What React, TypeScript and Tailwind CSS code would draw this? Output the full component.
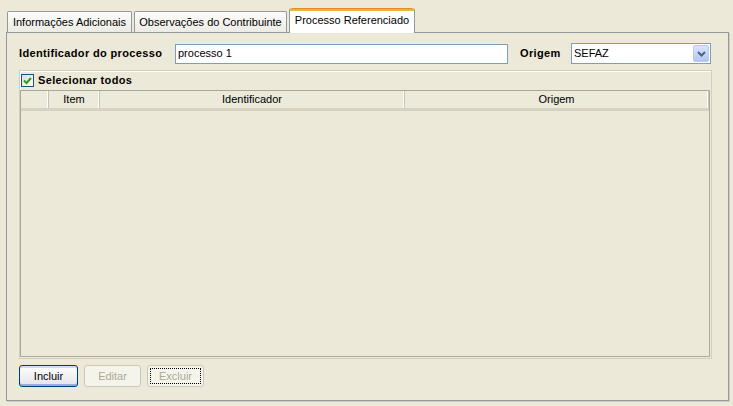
import React from 'react';

const Tab = ({ label, active }: { label: string; active?: boolean }) =>
  active ? (
    <div className="relative z-10 -mb-px flex h-[25px] w-[126px] flex-col rounded-t-[3px] border-x border-[#919b9c] bg-white">
      <div className="h-[3px] rounded-t-[3px] bg-[#e9b348] border-t border-[#e68b2c]" />
      <div className="flex flex-1 items-center justify-center whitespace-nowrap pb-[4px] text-black">{label}</div>
    </div>
  ) : (
    <div className="flex h-[21px] w-full items-center justify-center whitespace-nowrap rounded-t-[2px] border border-b-0 border-[#919b9c] bg-gradient-to-b from-[#fcfcfb] to-[#ecebe4]">
      {label}
    </div>
  );

const Header = ({ w, children }: { w: string; children?: React.ReactNode }) => (
  <div className={`${w} flex h-full items-center justify-center border-r border-[#c7c5b2] shadow-[inset_-1px_0_0_#ffffff]`}>
    {children}
  </div>
);

export default function App() {
  return (
    <div
      className="h-[406px] w-[733px] overflow-hidden bg-[#ece9d8] pl-[6px] pt-[7px] text-[11px] text-black"
      style={{ fontFamily: '"Liberation Sans", Arial, sans-serif' }}
    >
      <div className="flex h-[25px] items-end gap-[2px] pl-px">
        <div className="w-[125px]"><Tab label="Informações Adicionais" /></div>
        <div className="w-[153px]"><Tab label="Observações do Contribuinte" /></div>
        <Tab label="Processo Referenciado" active />
      </div>

      <div className="h-[369px] w-[723px] border border-[#919b9c] shadow-[1px_1px_0_#d0cdbf] px-[12px] pt-[10px]">
        <div className="flex h-[21px] items-center">
          <div className="w-[156px] font-bold tracking-[0.35px]">Identificador do processo</div>
          <div className="flex h-[20px] w-[333px] items-center border border-[#7f9db9] bg-white px-[2px]">processo 1</div>
          <div className="ml-[12px] w-[51px] font-bold tracking-[0.35px]">Origem</div>
          <div className="flex h-[21px] w-[140px] items-center border border-[#7f9db9] bg-white pl-[2px]">
            <span className="flex-1">SEFAZ</span>
            <div className="mr-px flex h-[17px] w-[16px] items-center justify-center rounded-[2px] border border-[#b9c9ef] bg-gradient-to-b from-[#dbe6fd] to-[#b2c5f4]">
              <svg width="9" height="6" viewBox="0 0 9 6">
                <path d="M1 1 L4.5 4.5 L8 1" stroke="#4d6185" strokeWidth="2" fill="none" />
              </svg>
            </div>
          </div>
        </div>

        <div className="mt-[6px] flex h-[289px] w-[693px] flex-col border border-[#d0d0bf] shadow-[inset_1px_1px_0_#ffffff]">
          <div className="flex h-[19px] items-center gap-[4px] pl-px">
            <div className="flex h-[13px] w-[13px] items-center justify-center border border-[#1c5180] bg-gradient-to-br from-[#dcdcd7] to-white">
              <svg width="9" height="8" viewBox="0 0 9 8">
                <path d="M1 3.5 L3.5 6 L8 1" stroke="#21a121" strokeWidth="2" fill="none" />
              </svg>
            </div>
            <span className="font-bold tracking-[0.35px]">Selecionar todos</span>
          </div>
          <div className="mb-[1px] mr-[1px] flex flex-1 flex-col border border-[#aca899]">
            <div className="flex h-[20px] border-b-[3px] border-[#d6d2c2] bg-[#ebeadb]">
              <Header w="w-[28px]" />
              <Header w="w-[51px]">Item</Header>
              <Header w="w-[305px]">Identificador</Header>
              <Header w="w-[304px]">Origem</Header>
            </div>
            <div className="flex-1 bg-[#ece9d8]" />
          </div>
        </div>

        <div className="mt-[6px] flex gap-[6px]">
          <button className="h-[22px] w-[59px] rounded-[3px] border border-[#003c74] bg-gradient-to-b from-white to-[#e3e3ea] shadow-[inset_0_-2px_0_#9aa9e3,inset_0_2px_0_#cedaf8]">
            Incluir
          </button>
          <button className="h-[22px] w-[57px] rounded-[3px] border border-[#c9c7ba] bg-[#f5f4ea] text-[#aca899]">
            Editar
          </button>
          <button className="flex h-[22px] w-[57px] rounded-[3px] border border-[#c9c7ba] bg-[#f5f4ea] p-[2px] text-[#aca899]">
            <span className="flex flex-1 items-center justify-center border border-dotted border-black leading-none">Excluir</span>
          </button>
        </div>
      </div>
    </div>
  );
}
